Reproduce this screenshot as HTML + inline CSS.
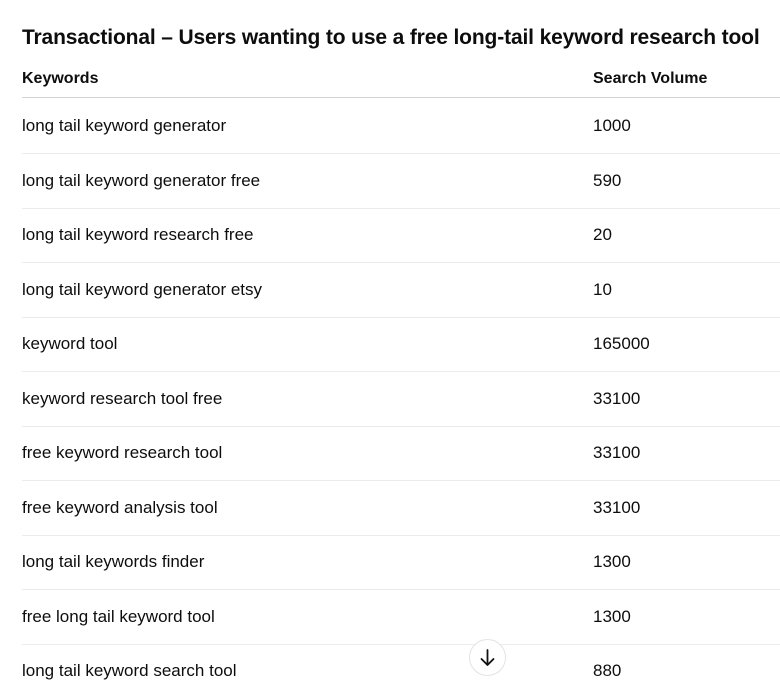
<!DOCTYPE html>
<html><head><meta charset="utf-8"><style>
body{margin:0;width:780px;height:697px;overflow:hidden;background:#fff;font-family:"Liberation Sans",sans-serif;color:#0d0d0d;position:relative}
h1{position:absolute;left:22px;top:26px;margin:0;font-size:21px;font-weight:bold;white-space:nowrap;letter-spacing:-0.14px}
.row{position:absolute;left:22px;width:758px;height:54.5px;border-bottom:1px solid #ececec;font-size:17px}
.row span{position:absolute;top:50%;transform:translateY(-45%)}
.row .v{left:571px}
.hd{font-weight:bold;border-bottom:1px solid #d4d4d4;font-size:16px}
.btn{position:absolute;left:469px;top:639px;width:37px;height:37px;border-radius:50%;border:1px solid #e3e3e3;background:#fff;box-sizing:border-box}
</style></head><body>
<h1>Transactional – Users wanting to use a free long-tail keyword research tool</h1>
<div class="row hd" style="top:58px;height:39px"><span>Keywords</span><span class="v">Search Volume</span></div>
<div class="row" style="top:98px"><span>long tail keyword generator</span><span class="v">1000</span></div>
<div class="row" style="top:153px"><span>long tail keyword generator free</span><span class="v">590</span></div>
<div class="row" style="top:207px"><span>long tail keyword research free</span><span class="v">20</span></div>
<div class="row" style="top:262px"><span>long tail keyword generator etsy</span><span class="v">10</span></div>
<div class="row" style="top:316px"><span>keyword tool</span><span class="v">165000</span></div>
<div class="row" style="top:371px"><span>keyword research tool free</span><span class="v">33100</span></div>
<div class="row" style="top:425px"><span>free keyword research tool</span><span class="v">33100</span></div>
<div class="row" style="top:480px"><span>free keyword analysis tool</span><span class="v">33100</span></div>
<div class="row" style="top:534px"><span>long tail keywords finder</span><span class="v">1300</span></div>
<div class="row" style="top:589px"><span>free long tail keyword tool</span><span class="v">1300</span></div>
<div class="row" style="top:643px;border-bottom:none"><span>long tail keyword search tool</span><span class="v">880</span></div>
<div class="btn"><svg width="35" height="35" viewBox="0 0 35 35"><path d="M17.5 10v15M11.5 19l6 6 6-6" fill="none" stroke="#111" stroke-width="1.8" stroke-linecap="round" stroke-linejoin="round"/></svg></div>
</body></html>
